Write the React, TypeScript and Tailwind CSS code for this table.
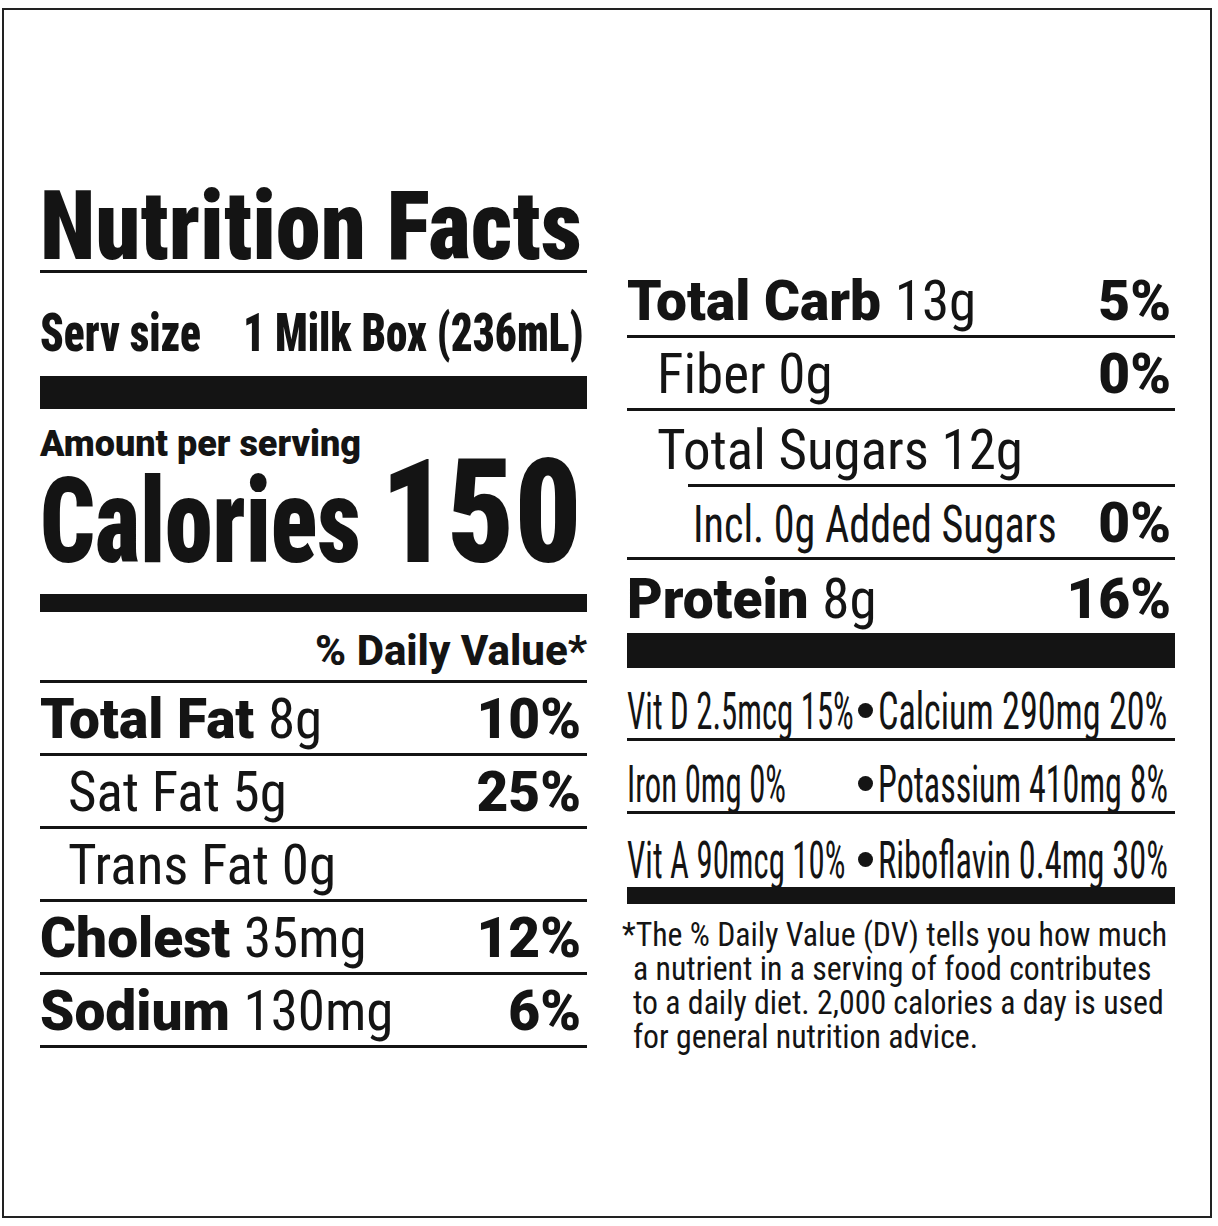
import type { ReactNode } from 'react';

const ink = 'text-[#141414]';

function Heavy({ children }: { children: ReactNode }) {
  return <span className="font-black [font-stretch:92%]">{children}</span>;
}

function Light({ children }: { children: ReactNode }) {
  return <span className="font-normal [font-stretch:75%]">{children}</span>;
}

function Pct({ children }: { children: ReactNode }) {
  return <span className="font-black text-[55px] leading-none whitespace-nowrap">{children}</span>;
}

function Row({ left, right, className = '' }: { left: ReactNode; right?: ReactNode; className?: string }) {
  return (
    <div className={`flex items-end h-[73px] pb-[6px] text-[55px] leading-none whitespace-nowrap ${className}`}>
      <div className="flex-1 min-w-0">{left}</div>
      {right && <div className="shrink-0">{right}</div>}
    </div>
  );
}

function VitRow({
  left,
  right,
  scale,
  className = '',
}: {
  left: string;
  right: string;
  scale: string;
  className?: string;
}) {
  return (
    <div className={`grid grid-cols-[231px_20px_1fr] items-end h-[73px] text-[52px] leading-none whitespace-nowrap font-normal [font-stretch:75%] ${className}`}>
      <span className="inline-block origin-left scale-x-[0.63]">{left}</span>
      <span className="self-end mb-[20px] w-[15px] h-[15px] rounded-full bg-[#141414]" />
      <span className={`inline-block origin-left ${scale}`}>{right}</span>
    </div>
  );
}

function LeftColumn() {
  return (
    <div className="w-[547px] mt-[168px] flex flex-col">
      <div className="h-[92px] text-[96px] leading-none font-black [font-stretch:75%] whitespace-nowrap">
        <span className="inline-block origin-left scale-x-[0.946]">Nutrition Facts</span>
      </div>
      <div className="h-[3px] bg-[#141414]" />

      <div className="mt-[33px] flex h-[54px] text-[54px] leading-none font-black [font-stretch:75%] whitespace-nowrap">
        <div className="flex-1 min-w-0">
          <span className="inline-block origin-left scale-x-[0.8]">Serv size</span>
        </div>
        <span className="shrink-0 inline-block origin-right scale-x-[0.8] pr-[4px]">1 Milk Box (236mL)</span>
      </div>
      <div className="mt-[16px] h-[33px] bg-[#141414]" />

      <div className="mt-[17px] text-[36px] leading-none font-black whitespace-nowrap">
        Amount per serving
      </div>

      <div className="mt-[1px] flex items-baseline font-black [font-stretch:75%] leading-[100px] whitespace-nowrap">
        <div className="flex-1 min-w-0 text-[118px]">
          <span className="inline-block origin-left scale-x-[0.815]">Calories</span>
        </div>
        <span className="shrink-0 text-[144px] inline-block origin-right scale-x-[0.91] pr-[6px]">150</span>
      </div>
      <div className="mt-[22px] h-[18px] bg-[#141414]" />

      <div className="mt-[18px] text-right text-[42px] leading-none font-extrabold whitespace-nowrap">
        % Daily Value*
      </div>
      <div className="mt-[8px] h-[3px] bg-[#141414]" />

      <Row
        className="border-b-[3px] border-[#141414] pr-[6px]"
        left={<><Heavy>Total Fat</Heavy> <Light>8g</Light></>}
        right={<Pct>10%</Pct>}
      />
      <Row
        className="border-b-[3px] border-[#141414] pl-[28px] pr-[6px]"
        left={<Light>Sat Fat 5g</Light>}
        right={<Pct>25%</Pct>}
      />
      <Row
        className="border-b-[3px] border-[#141414] pl-[28px] pr-[6px]"
        left={<Light>Trans Fat 0g</Light>}
      />
      <Row
        className="border-b-[3px] border-[#141414] pr-[6px]"
        left={<><Heavy>Cholest</Heavy> <Light>35mg</Light></>}
        right={<Pct>12%</Pct>}
      />
      <Row
        className="border-b-[3px] border-[#141414] pr-[6px]"
        left={<><Heavy>Sodium</Heavy> <Light>130mg</Light></>}
        right={<Pct>6%</Pct>}
      />
    </div>
  );
}

function RightColumn() {
  return (
    <div className="w-[548px] mt-[255px] flex flex-col">
      <Row
        className="border-b-[3px] border-[#141414] pr-[4px]"
        left={<><Heavy>Total Carb</Heavy> <Light>13g</Light></>}
        right={<Pct>5%</Pct>}
      />
      <Row
        className="border-b-[3px] border-[#141414] pl-[30px] pr-[4px]"
        left={<Light>Fiber 0g</Light>}
        right={<Pct>0%</Pct>}
      />
      <Row className="h-[70px] pl-[30px] pr-[4px]" left={<Light>Total Sugars 12g</Light>} />
      <div className="ml-[61px] h-[3px] bg-[#141414]" />
      <Row
        className="border-b-[3px] border-[#141414] pl-[66px] pr-[4px]"
        left={
          <span className="text-[52px] font-normal [font-stretch:75%] inline-block origin-left scale-x-[0.81]">
            Incl. 0g Added Sugars
          </span>
        }
        right={<Pct>0%</Pct>}
      />
      <Row
        className="pr-[4px]"
        left={<><Heavy>Protein</Heavy> <Light>8g</Light></>}
        right={<Pct>16%</Pct>}
      />
      <div className="h-[35px] bg-[#141414]" />

      <VitRow
        left="Vit D 2.5mcg 15%"
        right="Calcium 290mg 20%"
        scale="scale-x-[0.695]"
        className="border-b-[3px] border-[#141414]"
      />
      <VitRow
        left="Iron 0mg 0%"
        right="Potassium 410mg 8%"
        scale="scale-x-[0.655]"
        className="border-b-[3px] border-[#141414]"
      />
      <VitRow left="Vit A 90mcg 10%" right="Riboflavin 0.4mg 30%" scale="scale-x-[0.66]" className="h-[70px]" />
      <div className="h-[17px] bg-[#141414]" />

      <div className="mt-[13px] text-[34px] leading-[34px] font-normal [font-stretch:75%] whitespace-nowrap">
        <div className="-ml-[5px] origin-left scale-x-[0.935]">*The % Daily Value (DV) tells you how much</div>
        <div className="ml-[6px] origin-left scale-x-[0.935]">a nutrient in a serving of food contributes</div>
        <div className="ml-[6px] origin-left scale-x-[0.935]">to a daily diet. 2,000 calories a day is used</div>
        <div className="ml-[6px] origin-left scale-x-[0.935]">for general nutrition advice.</div>
      </div>
    </div>
  );
}

export default function App() {
  return (
    <div className={`w-[1218px] h-[1226px] bg-white pt-[8px] pl-[2px] font-['Roboto',sans-serif] ${ink}`}>
      <div className="w-[1210px] h-[1210px] border-2 border-[#222] flex items-start gap-[40px] pl-[36px]">
        <LeftColumn />
        <RightColumn />
      </div>
    </div>
  );
}
